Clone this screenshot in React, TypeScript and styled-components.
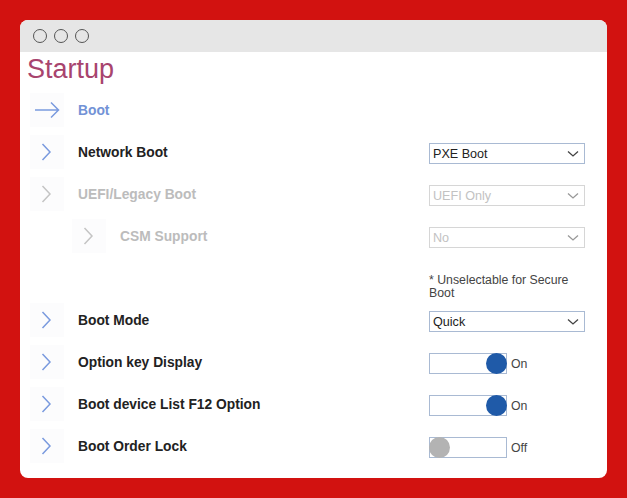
import styled, { createGlobalStyle } from 'styled-components';

const GlobalStyle = createGlobalStyle`
  html, body {
    margin: 0;
    padding: 0;
    background: #d21210;
  }
  * { box-sizing: border-box; }
`;

const Page = styled.div`
  width: 627px;
  height: 498px;
  padding: 20px;
  background: #d21210;
  font-family: "Liberation Sans", Arial, sans-serif;
`;

const Window = styled.div`
  width: 587px;
  height: 458px;
  background: #fff;
  border-radius: 8px;
  overflow: hidden;
`;

const TitleBar = styled.div`
  height: 32px;
  background: #e6e6e6;
  display: flex;
  align-items: center;
  gap: 7px;
  padding: 0 0 0 13px;
`;

const Dot = styled.span`
  width: 14px;
  height: 14px;
  border-radius: 50%;
  border: 1.5px solid #555;
`;

const Heading = styled.h1`
  margin: 0;
  height: 37px;
  padding: 2px 0 0 7px;
  font-weight: 400;
  font-size: 27px;
  line-height: 30px;
  color: #a8446e;
`;

const Row = styled.div<{ $indent?: number }>`
  height: 42px;
  display: flex;
  align-items: center;
  padding: 0 22px 0 ${(p) => 10 + (p.$indent || 0)}px;
`;

const IconBox = styled.span`
  width: 34px;
  height: 34px;
  background: #fcfcfd;
  display: flex;
  flex-shrink: 0;
`;

const Label = styled.span<{ $tone?: 'active' | 'disabled' }>`
  flex: 1;
  margin-left: 14px;
  font-size: 13.8px;
  font-weight: 700;
  color: ${(p) => (p.$tone === 'active' ? '#7292d6' : p.$tone === 'disabled' ? '#bcbcbc' : '#222')};
`;

const Control = styled.div`
  width: 156px;
  margin-top: 3px;
  display: flex;
  align-items: center;
`;

const Select = styled.div<{ $disabled?: boolean }>`
  width: 156px;
  height: 21px;
  border: 1px solid ${(p) => (p.$disabled ? '#d6d6d6' : '#a9bad3')};
  display: flex;
  align-items: center;
  justify-content: space-between;
  padding: 0 5px 0 3px;
  font-size: 12.6px;
  color: ${(p) => (p.$disabled ? '#c2c2c2' : '#222')};
`;

const Note = styled.div`
  width: 156px;
  font-size: 12.3px;
  line-height: 13px;
  color: #444;
  margin-top: 18px;
`;

const Toggle = styled.div<{ $on: boolean }>`
  width: 78px;
  height: 21px;
  border: 1px solid #a9bad3;
  display: flex;
  align-items: center;
  justify-content: ${(p) => (p.$on ? 'flex-end' : 'flex-start')};
`;

const Knob = styled.span<{ $on: boolean }>`
  width: 21px;
  height: 21px;
  border-radius: 50%;
  margin: 0 -1px;
  background: ${(p) => (p.$on ? '#1f5aa8' : '#b3b3b3')};
`;

const ToggleText = styled.span`
  margin-left: 4px;
  font-size: 12.3px;
  color: #444;
`;

const Chevron = ({ color }: { color: string }) => (
  <svg width="34" height="34" viewBox="0 0 34 34">
    <path d="M12.5 9 L20 17 L12.5 25" fill="none" stroke={color} strokeWidth="1.5" />
  </svg>
);

const Arrow = () => (
  <svg width="34" height="34" viewBox="0 0 34 34">
    <path d="M5 17 H28.5 M21 9.5 L28.5 17 L21 24.5" fill="none" stroke="#7a9ade" strokeWidth="1.5" />
  </svg>
);

const Caret = ({ color }: { color: string }) => (
  <svg width="12" height="8" viewBox="0 0 12 8">
    <path d="M1 1.5 L6 6 L11 1.5" fill="none" stroke={color} strokeWidth="1.3" />
  </svg>
);

function Dropdown({ value, disabled }: { value: string; disabled?: boolean }) {
  return (
    <Select $disabled={disabled}>
      <span>{value}</span>
      <Caret color={disabled ? '#999' : '#444'} />
    </Select>
  );
}

function Switch({ on }: { on: boolean }) {
  return (
    <>
      <Toggle $on={on}>
        <Knob $on={on} />
      </Toggle>
      <ToggleText>{on ? 'On' : 'Off'}</ToggleText>
    </>
  );
}

const blue = '#7a9ade';
const grey = '#c4c4c4';

export default function App() {
  return (
    <>
      <GlobalStyle />
      <Page>
        <Window>
          <TitleBar>
            <Dot />
            <Dot />
            <Dot />
          </TitleBar>
          <Heading>Startup</Heading>

          <Row>
            <IconBox><Arrow /></IconBox>
            <Label $tone="active">Boot</Label>
          </Row>
          <Row>
            <IconBox><Chevron color={blue} /></IconBox>
            <Label>Network Boot</Label>
            <Control><Dropdown value="PXE Boot" /></Control>
          </Row>
          <Row>
            <IconBox><Chevron color={grey} /></IconBox>
            <Label $tone="disabled">UEFI/Legacy Boot</Label>
            <Control><Dropdown value="UEFI Only" disabled /></Control>
          </Row>
          <Row $indent={42}>
            <IconBox><Chevron color={grey} /></IconBox>
            <Label $tone="disabled">CSM Support</Label>
            <Control><Dropdown value="No" disabled /></Control>
          </Row>
          <Row>
            <Label />
            <Note>* Unselectable for Secure Boot</Note>
          </Row>
          <Row>
            <IconBox><Chevron color={blue} /></IconBox>
            <Label>Boot Mode</Label>
            <Control><Dropdown value="Quick" /></Control>
          </Row>
          <Row>
            <IconBox><Chevron color={blue} /></IconBox>
            <Label>Option key Display</Label>
            <Control><Switch on /></Control>
          </Row>
          <Row>
            <IconBox><Chevron color={blue} /></IconBox>
            <Label>Boot device List F12 Option</Label>
            <Control><Switch on /></Control>
          </Row>
          <Row>
            <IconBox><Chevron color={blue} /></IconBox>
            <Label>Boot Order Lock</Label>
            <Control><Switch on={false} /></Control>
          </Row>
        </Window>
      </Page>
    </>
  );
}
